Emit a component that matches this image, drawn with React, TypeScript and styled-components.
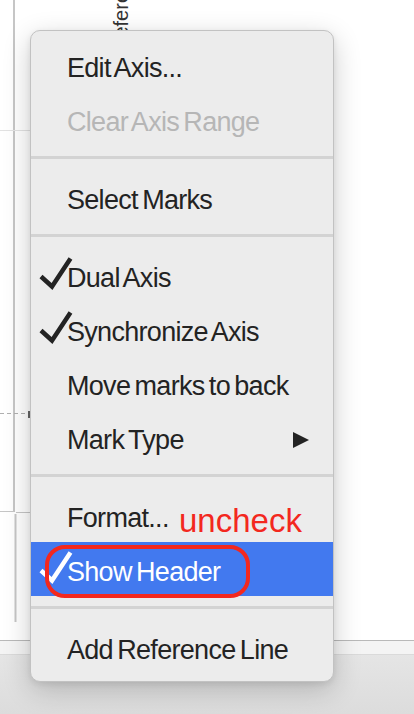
import React from 'react'
import styled, { createGlobalStyle } from 'styled-components'

const GlobalStyle = createGlobalStyle`
  html, body {
    margin: 0;
    padding: 0;
    background: #ffffff;
  }
  body {
    font-family: "Liberation Sans", Arial, sans-serif;
  }
`

const Page = styled.div`
  position: relative;
  width: 414px;
  height: 714px;
  overflow: hidden;
  display: flex;
  flex-direction: column;
  background: #ffffff;
`

const ChartArea = styled.div`
  flex: none;
  height: 640px;
`

const StatusBar = styled.div`
  flex: 1;
  border-top: 1px solid #b9b9b9;
  background: linear-gradient(#e7e7e7, #dcdcdc);
`

const StatusStrip = styled.div`
  height: 13px;
  background: #f4f4f4;
  border-bottom: 1px solid #dadada;
`

const Menu = styled.div`
  position: absolute;
  left: 30px;
  top: 30px;
  width: 304px;
  box-sizing: border-box;
  padding: 7px 0;
  background: #ececec;
  border: 1px solid #c2c2c2;
  border-radius: 10px;
  box-shadow: 0 8px 28px rgba(0, 0, 0, 0.2), 0 2px 6px rgba(0, 0, 0, 0.08);
`

const Row = styled.div<{ $active?: boolean }>`
  position: relative;
  display: flex;
  height: 54px;
  box-sizing: border-box;
  padding: 0 24px 0 36px;
  background: ${(p) => (p.$active ? '#4279ef' : 'transparent')};
  color: ${(p) => (p.$active ? '#ffffff' : '#232323')};
`

const Label = styled.span<{ $disabled?: boolean }>`
  padding-top: 7px;
  line-height: 47px;
  font-size: 27px;
  letter-spacing: -0.7px;
  word-spacing: -2.5px;
  white-space: nowrap;
  color: ${(p) => (p.$disabled ? '#b6b6b6' : 'inherit')};
`

const CheckMark = styled.svg`
  flex: none;
  width: 34px;
  height: 54px;
  margin-left: -28px;
  margin-right: -6px;
  overflow: visible;
`

const Separator = styled.div`
  height: 3px;
  margin: 10px 0 11px;
  background: #d3d3d3;
`

const SubmenuArrow = styled.span`
  margin-left: auto;
  margin-top: 22px;
  width: 0;
  height: 0;
  border-left: 16px solid #232323;
  border-top: 8px solid transparent;
  border-bottom: 8px solid transparent;
`

const Annotation = styled.span`
  position: absolute;
  left: 148px;
  top: 16px;
  font-size: 33px;
  line-height: 33px;
  color: #f3281e;
  white-space: nowrap;
`

const Highlight = styled.span`
  position: absolute;
  left: 14px;
  top: 3px;
  width: 205px;
  height: 53px;
  box-sizing: border-box;
  border: 4px solid #f3281e;
  border-radius: 20px;
`

const Check = () => (
  <CheckMark viewBox="0 0 34 54">
    <polyline
      points="2,28.5 13,38.5 31.5,10.5"
      fill="none"
      stroke="currentColor"
      strokeWidth="4.5"
      strokeLinejoin="miter"
    />
  </CheckMark>
)

const ChartBackdrop = () => (
  <svg width="414" height="640" viewBox="0 0 414 640">
    <line x1="14" y1="0" x2="14" y2="512" stroke="#c6c6c6" strokeWidth="2" />
    <line x1="0" y1="130.5" x2="30" y2="130.5" stroke="#e2e2e2" strokeWidth="1" />
    <line x1="0" y1="413.5" x2="26" y2="413.5" stroke="#b0b0b0" strokeWidth="1" strokeDasharray="4 3" />
    <line x1="29" y1="411" x2="29" y2="418" stroke="#666" strokeWidth="2" />
    <line x1="0" y1="511.5" x2="14" y2="511.5" stroke="#c6c6c6" strokeWidth="1" />
    <line x1="16" y1="512.5" x2="30" y2="512.5" stroke="#c6c6c6" strokeWidth="1" />
    <line x1="15.5" y1="514" x2="15.5" y2="622" stroke="#c6c6c6" strokeWidth="2" />
    <text
      transform="rotate(-90)"
      x="-52"
      y="128"
      fontSize="20"
      fill="#333"
      fontFamily='"Liberation Sans", Arial, sans-serif'
    >
      Reference
    </text>
  </svg>
)

export default function App() {
  return (
    <Page>
      <GlobalStyle />
      <ChartArea>
        <ChartBackdrop />
      </ChartArea>
      <StatusBar>
        <StatusStrip />
      </StatusBar>

      <Menu>
        <Row>
          <Label>Edit Axis...</Label>
        </Row>
        <Row>
          <Label $disabled>Clear Axis Range</Label>
        </Row>
        <Separator />
        <Row>
          <Label>Select Marks</Label>
        </Row>
        <Separator />
        <Row>
          <Check />
          <Label>Dual Axis</Label>
        </Row>
        <Row>
          <Check />
          <Label>Synchronize Axis</Label>
        </Row>
        <Row>
          <Label>Move marks to back</Label>
        </Row>
        <Row>
          <Label>Mark Type</Label>
          <SubmenuArrow />
        </Row>
        <Separator />
        <Row>
          <Label>Format...</Label>
          <Annotation>uncheck</Annotation>
        </Row>
        <Row $active>
          <Check />
          <Label>Show Header</Label>
          <Highlight />
        </Row>
        <Separator />
        <Row>
          <Label>Add Reference Line</Label>
        </Row>
      </Menu>
    </Page>
  )
}
